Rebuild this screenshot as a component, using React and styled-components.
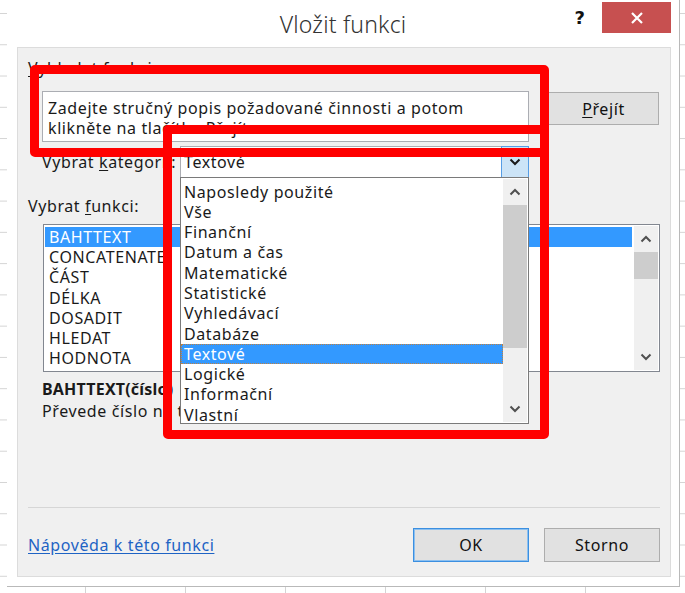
import React from "react";
import styled, { createGlobalStyle } from "styled-components";

const GlobalStyle = createGlobalStyle`
  html, body {
    margin: 0;
    padding: 0;
  }
  body {
    font-family: "Noto Sans", "Open Sans", sans-serif;
    color: #1a1a1a;
  }
`;

const categories = [
  "Naposledy použité",
  "Vše",
  "Finanční",
  "Datum a čas",
  "Matematické",
  "Statistické",
  "Vyhledávací",
  "Databáze",
  "Textové",
  "Logické",
  "Informační",
  "Vlastní",
];

const functions = [
  "BAHTTEXT",
  "CONCATENATE",
  "ČÁST",
  "DÉLKA",
  "DOSADIT",
  "HLEDAT",
  "HODNOTA",
];

const ChevronUp = () => (
  <svg width="12" height="8" viewBox="0 0 12 8">
    <path d="M1.5 6.5 L6 2 L10.5 6.5" fill="none" stroke="#505050" strokeWidth="2" />
  </svg>
);

const ChevronDown = ({ color = "#505050" }) => (
  <svg width="12" height="8" viewBox="0 0 12 8">
    <path d="M1.5 1.5 L6 6 L10.5 1.5" fill="none" stroke={color} strokeWidth="2" />
  </svg>
);

const App = () => {
  return (
    <Page>
      <GlobalStyle />
      <Window>
        <TitleBar>
          <span />
          <Title>Vložit funkci</Title>
          <TitleTools>
            <Help>?</Help>
            <Close>
              <svg width="16" height="16" viewBox="0 0 16 16">
                <path d="M3 3 L13 13 M13 3 L3 13" stroke="#fff" strokeWidth="2.2" />
              </svg>
            </Close>
          </TitleTools>
        </TitleBar>

        <Panel>
          <Label>
            <u>V</u>yhledat funkci:
          </Label>
          <SearchRow>
            <SearchBox>
              Zadejte stručný popis požadované činnosti a potom
              <br />
              klikněte na tlačítko Přejít
            </SearchBox>
            <Button $width={111} $height={33}>
              <u>P</u>řejít
            </Button>
          </SearchRow>

          <CategoryRow>
            <Label $width={138}>
              Vybrat <u>k</u>ategorii:
            </Label>
            <Combo>
              <ComboValue>Textové</ComboValue>
              <ComboButton>
                <ChevronDown color="#1a1a1a" />
              </ComboButton>
              <DropList>
                <DropItems>
                  {categories.map((c) => (
                    <DropItem key={c} $selected={c === "Textové"}>
                      {c}
                    </DropItem>
                  ))}
                </DropItems>
                <ScrollBar>
                  <ScrollArrow>
                    <ChevronUp />
                  </ScrollArrow>
                  <Track>
                    <Thumb style={{ height: "143px" }} />
                  </Track>
                  <ScrollArrow>
                    <ChevronDown />
                  </ScrollArrow>
                </ScrollBar>
              </DropList>
            </Combo>
          </CategoryRow>

          <Label $top={18}>
            Vybrat <u>f</u>unkci:
          </Label>
          <FunctionList>
            <ListItems>
              {functions.map((f) => (
                <ListItem key={f} $selected={f === "BAHTTEXT"}>
                  {f}
                </ListItem>
              ))}
            </ListItems>
            <ScrollBar>
              <ScrollArrow>
                <ChevronUp />
              </ScrollArrow>
              <Track>
                <Thumb style={{ height: "27px" }} />
              </Track>
              <ScrollArrow>
                <ChevronDown />
              </ScrollArrow>
            </ScrollBar>
          </FunctionList>

          <Signature>BAHTTEXT(číslo)</Signature>
          <Description>Převede číslo na text (baht).</Description>

          <Spacer />
          <Separator />
          <Footer>
            <HelpLink>Nápověda k této funkci</HelpLink>
            <Buttons>
              <Button $width={116} $height={34} $focused>
                OK
              </Button>
              <Button $width={116} $height={34}>
                Storno
              </Button>
            </Buttons>
          </Footer>
        </Panel>
      </Window>

      <Annotation $left={30} $top={65} $width={519} $height={92} />
      <Annotation $left={163} $top={125} $width={386} $height={314} />
    </Page>
  );
};

export default App;

const Page = styled.div`
  position: relative;
  width: 685px;
  height: 593px;
  overflow: hidden;
  background-color: #ffffff;
  background-image: linear-gradient(to bottom, #d4d4d4 1px, transparent 1px),
    linear-gradient(to right, #d4d4d4 1px, transparent 1px);
  background-size: 100% 31.27px, 100px 100%;
  background-position: 0 13px, 85px 0;
`;

const Window = styled.div`
  margin-left: 7px;
  width: 672px;
  height: 586px;
  background: #ffffff;
  border-right: 1px solid #b9b9b9;
  border-bottom: 1px solid #b9b9b9;
  display: flex;
  flex-direction: column;
`;

const TitleBar = styled.div`
  height: 47px;
  flex: 0 0 auto;
  display: grid;
  grid-template-columns: 1fr auto 1fr;
  align-items: start;
`;

const Title = styled.div`
  padding-top: 8px;
  font-size: 23px;
  font-weight: 300;
  color: #333333;
  letter-spacing: 0.2px;
`;

const TitleTools = styled.div`
  display: flex;
  justify-content: flex-end;
  align-items: flex-start;
  padding-top: 2px;
  padding-right: 8px;
`;

const Help = styled.div`
  font-family: "DejaVu Sans", sans-serif;
  font-weight: 700;
  font-size: 18px;
  line-height: 20px;
  margin-top: 6px;
  margin-right: 17px;
  color: #111;
`;

const Close = styled.div`
  width: 69px;
  height: 31px;
  background: #c75050;
  display: flex;
  align-items: center;
  justify-content: center;
`;

const Panel = styled.div`
  flex: 1;
  margin: 0 8px 9px 10px;
  background: #f0f0f0;
  border: 1px solid #dcdcdc;
  padding: 10px 10px 14px 10px;
  display: flex;
  flex-direction: column;
  font-size: 16px;
  letter-spacing: 0.6px;
`;

const Label = styled.div`
  line-height: 20px;
  margin-top: ${(p) => (p.$top ? `${p.$top}px` : "0")};
  flex: ${(p) => (p.$width ? `0 0 ${p.$width}px` : "0 0 auto")};
  white-space: nowrap;
  u {
    text-decoration-thickness: 1px;
    text-underline-offset: 2px;
  }
`;

const SearchRow = styled.div`
  margin-top: 13px;
  padding-left: 14px;
  display: flex;
  align-items: flex-start;
  gap: 19px;
`;

const SearchBox = styled.div`
  width: 487px;
  height: 51px;
  box-sizing: border-box;
  background: #ffffff;
  border: 1px solid #abadb3;
  padding: 6px 5px;
  line-height: 20px;
  color: #1a1a1a;
`;

const Button = styled.div`
  width: ${(p) => p.$width}px;
  height: ${(p) => p.$height}px;
  box-sizing: border-box;
  margin-top: 1px;
  background: #e1e1e1;
  border: 1px solid ${(p) => (p.$focused ? "#3b8fe0" : "#adadad")};
  box-shadow: ${(p) => (p.$focused ? "inset 0 0 0 1px #8cc0f0" : "none")};
  display: flex;
  align-items: center;
  justify-content: center;
  color: #111;
  u {
    text-underline-offset: 2px;
  }
`;

const CategoryRow = styled.div`
  margin-top: 4px;
  padding-left: 14px;
  display: flex;
  align-items: center;
`;

const Combo = styled.div`
  position: relative;
  width: 349px;
  height: 32px;
  box-sizing: border-box;
  background: #ffffff;
  border: 1px solid #abadb3;
  display: flex;
`;

const ComboValue = styled.div`
  flex: 1;
  padding-left: 3px;
  line-height: 30px;
`;

const ComboButton = styled.div`
  width: 26px;
  margin: -1px -1px -1px 0;
  background: #cce4f7;
  border: 1px solid #569de5;
  display: flex;
  align-items: center;
  justify-content: center;
`;

const DropList = styled.div`
  position: absolute;
  left: -1px;
  top: 30px;
  width: 349px;
  height: 247px;
  box-sizing: border-box;
  background: #ffffff;
  border: 1px solid #7a7a7a;
  display: flex;
  z-index: 2;
`;

const DropItems = styled.div`
  flex: 1;
  padding-top: 3.5px;
`;

const DropItem = styled.div`
  height: 20.3px;
  line-height: 20px;
  padding-left: 3px;
  background: ${(p) => (p.$selected ? "#3399ff" : "transparent")};
  color: ${(p) => (p.$selected ? "#ffffff" : "#1a1a1a")};
  outline: ${(p) => (p.$selected ? "1px dotted #c08040" : "none")};
  outline-offset: -1px;
  white-space: nowrap;
`;

const ScrollBar = styled.div`
  width: 24px;
  margin: 1px 1px 1px 0;
  background: #f0f0f0;
  display: flex;
  flex-direction: column;
`;

const ScrollArrow = styled.div`
  height: 26px;
  display: flex;
  align-items: center;
  justify-content: center;
`;

const Track = styled.div`
  flex: 1;
`;

const Thumb = styled.div`
  width: 24px;
  background: #cdcdcd;
`;

const FunctionList = styled.div`
  margin-top: 8px;
  margin-left: 15px;
  width: 617px;
  height: 148px;
  box-sizing: border-box;
  background: #ffffff;
  border: 1px solid #828790;
  display: flex;
`;

const ListItems = styled.div`
  flex: 1;
  padding: 2px 2px 0 1px;
`;

const ListItem = styled.div`
  height: 20.2px;
  line-height: 20px;
  padding-left: 4px;
  background: ${(p) => (p.$selected ? "#3399ff" : "transparent")};
  color: ${(p) => (p.$selected ? "#ffffff" : "#1a1a1a")};
  white-space: nowrap;
`;

const Signature = styled.div`
  margin-top: 7px;
  padding-left: 14px;
  font-weight: 700;
  letter-spacing: 0.2px;
  line-height: 20px;
`;

const Description = styled.div`
  margin-top: 2px;
  padding-left: 14px;
  line-height: 20px;
`;

const Spacer = styled.div`
  flex: 1;
`;

const Separator = styled.div`
  height: 1px;
  background: #d6d6d6;
`;

const Footer = styled.div`
  margin-top: 19px;
  display: flex;
  align-items: center;
  justify-content: space-between;
`;

const HelpLink = styled.a`
  color: #1e63c4;
  text-decoration: underline;
  text-underline-offset: 2px;
`;

const Buttons = styled.div`
  display: flex;
  gap: 15px;
`;

const Annotation = styled.div`
  position: absolute;
  left: ${(p) => p.$left}px;
  top: ${(p) => p.$top}px;
  width: ${(p) => p.$width}px;
  height: ${(p) => p.$height}px;
  box-sizing: border-box;
  border: 9px solid #ff0000;
  border-radius: 5px;
  pointer-events: none;
  z-index: 5;
`;
